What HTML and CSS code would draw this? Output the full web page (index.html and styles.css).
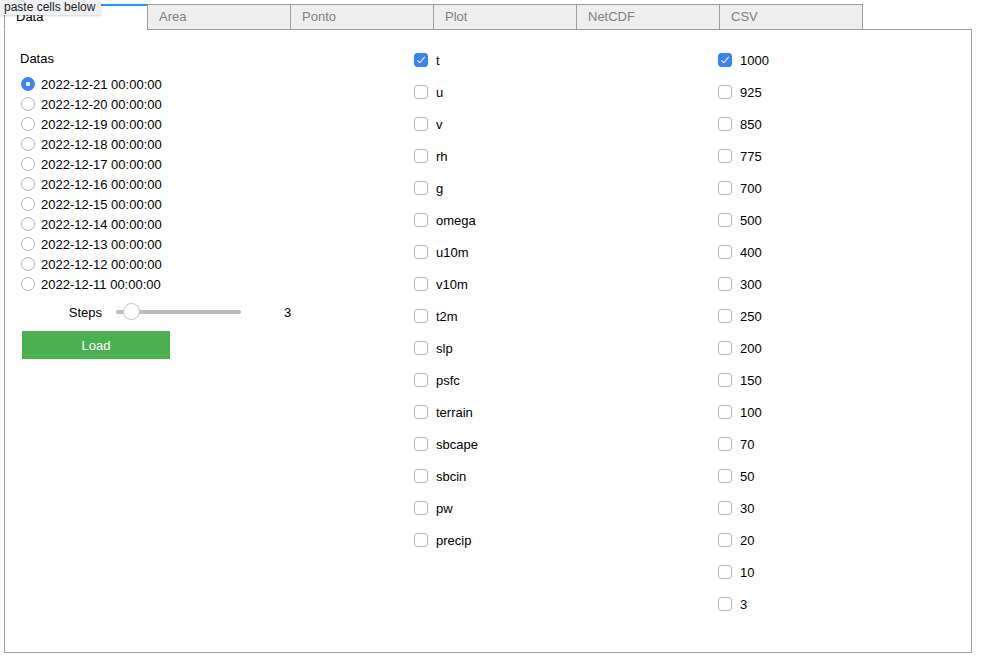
FILE: index.html
```html
<!DOCTYPE html>
<html>
<head>
<meta charset="utf-8">
<link rel="stylesheet" href="styles.css">
</head>
<body>
<div class="widget">
  <div class="tooltip">paste cells below</div>
  <div class="tabbar">
    <div class="tab active">Data</div>
    <div class="tab">Area</div>
    <div class="tab">Ponto</div>
    <div class="tab">Plot</div>
    <div class="tab">NetCDF</div>
    <div class="tab">CSV</div>
  </div>
  <div class="panel">
    <div class="col col-dates">
      <div class="title">Datas</div>
      <div class="radios">
        <label class="radio"><input type="radio" name="d" checked><span>2022-12-21 00:00:00</span></label>
        <label class="radio"><input type="radio" name="d"><span>2022-12-20 00:00:00</span></label>
        <label class="radio"><input type="radio" name="d"><span>2022-12-19 00:00:00</span></label>
        <label class="radio"><input type="radio" name="d"><span>2022-12-18 00:00:00</span></label>
        <label class="radio"><input type="radio" name="d"><span>2022-12-17 00:00:00</span></label>
        <label class="radio"><input type="radio" name="d"><span>2022-12-16 00:00:00</span></label>
        <label class="radio"><input type="radio" name="d"><span>2022-12-15 00:00:00</span></label>
        <label class="radio"><input type="radio" name="d"><span>2022-12-14 00:00:00</span></label>
        <label class="radio"><input type="radio" name="d"><span>2022-12-13 00:00:00</span></label>
        <label class="radio"><input type="radio" name="d"><span>2022-12-12 00:00:00</span></label>
        <label class="radio"><input type="radio" name="d"><span>2022-12-11 00:00:00</span></label>
      </div>
      <div class="slider-row">
        <span class="slider-label">Steps</span>
        <div class="track"><div class="thumb"></div></div>
        <span class="slider-value">3</span>
      </div>
      <button class="load">Load</button>
    </div>
    <div class="col col-vars">
      <label class="check"><input type="checkbox" checked><span>t</span></label>
      <label class="check"><input type="checkbox"><span>u</span></label>
      <label class="check"><input type="checkbox"><span>v</span></label>
      <label class="check"><input type="checkbox"><span>rh</span></label>
      <label class="check"><input type="checkbox"><span>g</span></label>
      <label class="check"><input type="checkbox"><span>omega</span></label>
      <label class="check"><input type="checkbox"><span>u10m</span></label>
      <label class="check"><input type="checkbox"><span>v10m</span></label>
      <label class="check"><input type="checkbox"><span>t2m</span></label>
      <label class="check"><input type="checkbox"><span>slp</span></label>
      <label class="check"><input type="checkbox"><span>psfc</span></label>
      <label class="check"><input type="checkbox"><span>terrain</span></label>
      <label class="check"><input type="checkbox"><span>sbcape</span></label>
      <label class="check"><input type="checkbox"><span>sbcin</span></label>
      <label class="check"><input type="checkbox"><span>pw</span></label>
      <label class="check"><input type="checkbox"><span>precip</span></label>
    </div>
    <div class="col col-levels">
      <label class="check"><input type="checkbox" checked><span>1000</span></label>
      <label class="check"><input type="checkbox"><span>925</span></label>
      <label class="check"><input type="checkbox"><span>850</span></label>
      <label class="check"><input type="checkbox"><span>775</span></label>
      <label class="check"><input type="checkbox"><span>700</span></label>
      <label class="check"><input type="checkbox"><span>500</span></label>
      <label class="check"><input type="checkbox"><span>400</span></label>
      <label class="check"><input type="checkbox"><span>300</span></label>
      <label class="check"><input type="checkbox"><span>250</span></label>
      <label class="check"><input type="checkbox"><span>200</span></label>
      <label class="check"><input type="checkbox"><span>150</span></label>
      <label class="check"><input type="checkbox"><span>100</span></label>
      <label class="check"><input type="checkbox"><span>70</span></label>
      <label class="check"><input type="checkbox"><span>50</span></label>
      <label class="check"><input type="checkbox"><span>30</span></label>
      <label class="check"><input type="checkbox"><span>20</span></label>
      <label class="check"><input type="checkbox"><span>10</span></label>
      <label class="check"><input type="checkbox"><span>3</span></label>
    </div>
  </div>
</div>
</body>
</html>
```
FILE: styles.css
```css
body {
  margin: 0;
  font-family: "Liberation Sans", Arial, sans-serif;
  font-size: 13px;
  color: #000;
  background: #fff;
}
.widget {
  position: relative;
  padding: 4px 0 0 4px;
  width: 968px;
}
.tooltip {
  position: absolute;
  left: 0;
  top: 0;
  height: 15px;
  padding: 0 6px 0 4px;
  background: #eef0f2;
  color: #222;
  font-size: 12px;
  line-height: 14px;
  box-shadow: 0 1px 2px rgba(0, 0, 0, 0.18);
  z-index: 5;
}
.tabbar {
  display: flex;
  height: 26px;
  margin-bottom: -1px;
  position: relative;
  z-index: 2;
}
.tab {
  box-sizing: border-box;
  width: 144px;
  height: 26px;
  margin-left: -1px;
  padding: 0 11px;
  border: 1px solid #9e9e9e;
  background: #eeeeee;
  color: #808080;
  line-height: 24px;
}
.tab:first-child {
  margin-left: 0;
}
.tab.active {
  background: #fff;
  color: #000;
  border-top-color: #2196f3;
  border-bottom-color: #fff;
  box-shadow: inset 0 1px 0 #2196f3;
}
.panel {
  box-sizing: border-box;
  width: 968px;
  height: 624px;
  border: 1px solid #9e9e9e;
  padding: 14px 15px 0 15px;
  display: flex;
  align-items: flex-start;
}
.col-dates {
  width: 394px;
  flex: none;
}
.col-vars {
  width: 304px;
  flex: none;
}
.col-levels {
  flex: 1;
}
.title {
  height: 30px;
  line-height: 30px;
}
.radio {
  display: flex;
  align-items: center;
  height: 20px;
}
.radio input {
  appearance: none;
  -webkit-appearance: none;
  box-sizing: border-box;
  width: 14px;
  height: 14px;
  margin: 0 6px 0 1px;
  border: 1px solid #b3b3b3;
  border-radius: 50%;
  background: #fff;
}
.radio input:checked {
  border-color: #3b86f5;
  background: radial-gradient(circle, #fff 0 2px, #3b86f5 2.5px);
}
.slider-row {
  display: flex;
  align-items: center;
  height: 28px;
  margin-top: 4px;
}
.slider-label {
  width: 82px;
  text-align: right;
}
.track {
  position: relative;
  width: 125px;
  height: 4px;
  margin-left: 14px;
  border-radius: 2px;
  background: #bdbdbd;
}
.thumb {
  position: absolute;
  left: 7px;
  top: -7px;
  box-sizing: border-box;
  width: 17px;
  height: 17px;
  border: 1px solid #c4c4c4;
  border-radius: 50%;
  background: #fff;
}
.slider-value {
  margin-left: 43px;
}
.load {
  display: block;
  width: 148px;
  height: 28px;
  margin: 5px 0 0 2px;
  border: none;
  background: #4caf50;
  color: #fff;
  font-family: inherit;
  font-size: 13px;
  padding: 0;
}
.check {
  display: flex;
  align-items: center;
  height: 32px;
}
.check input {
  appearance: none;
  -webkit-appearance: none;
  position: relative;
  box-sizing: border-box;
  width: 14px;
  height: 14px;
  margin: 0 8px 0 0;
  border: 1px solid #b8b8b8;
  border-radius: 3px;
  background: #fff;
}
.check input:checked {
  border-color: #3b86f5;
  background: #3b86f5;
}
.check input:checked::after {
  content: "";
  position: absolute;
  left: 4px;
  top: 1px;
  width: 3px;
  height: 7px;
  border: solid #fff;
  border-width: 0 1.5px 1.5px 0;
  transform: rotate(40deg);
}
```
